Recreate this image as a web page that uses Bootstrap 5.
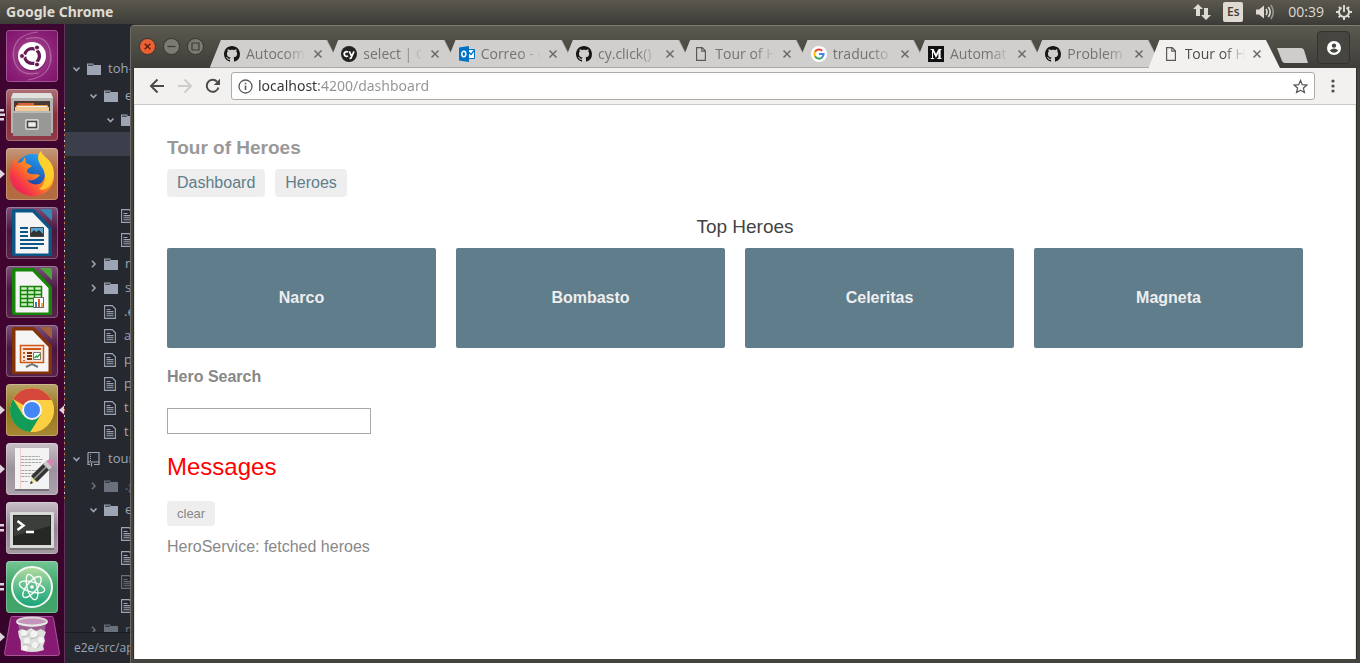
<!DOCTYPE html>
<html lang="en">
<head>
<meta charset="utf-8">
<meta name="viewport" content="width=device-width, initial-scale=1">
<title>Tour of Heroes</title>
<link href="https://cdn.jsdelivr.net/npm/bootstrap@5.3.0/dist/css/bootstrap.min.css" rel="stylesheet">
<style>
  body { font-family: "Open Sans", "Noto Sans", sans-serif; background: #282b30; }
  svg { display: block; flex: none; }
  button { padding: 0; border: 0; background: none; }

  /* system bar */
  .sysbar { height: 24px; background: linear-gradient(#5a584e, #3d3c38); color: #dfdbd2; font-size: 14px; line-height: 24px; padding: 0 8px 0 6px; }
  .sysbar strong { font-family: "Noto Sans", sans-serif; }
  .tray { gap: 12px; }
  .keymap { width: 20px; height: 20px; border-radius: 2px; background: #dfdbd2; color: #3d3c38; font-size: 12px; font-weight: 600; line-height: 20px; text-align: center; }

  /* launcher */
  .launcher { position: relative; width: 65px; padding: 6px 0 0 6px; gap: 7px; background: linear-gradient(#3d0630, #42032f 60%, #35042a); border-right: 1px solid #66305c; }
  .launcher::after { content: ""; position: absolute; right: -1px; top: 13%; bottom: 25%; width: 1px; background: repeating-linear-gradient(#d9c9c4 0 2px, #3c2a3a 2px 5px, #c7764e 5px 7px, #4a2f45 7px 11px); }
  .tile { width: 52px; height: 52px; border-radius: 4px; box-shadow: inset 0 0 0 1px #ffffff40; }
  .tile.bin { height: 42px; margin-top: -4px; box-shadow: none; }
  .pip { left: -6px; top: 0; }
  .pip-end { right: -6px; top: 0; }
  .t-dash { background: radial-gradient(circle at 50% 50%, #b463a1, #8c2178 60%, #7d1168); }
  .t-files { background: linear-gradient(#ad7278, #8b2d3a 50%, #8f3c48); }
  .t-fox { background: linear-gradient(#c49a7c, #b5683a 45%, #b46c42); }
  .t-office { background: linear-gradient(#7d527b, #4b1640 45%, #582449); }
  .t-chrome { background: linear-gradient(#b8a369, #96761b 50%, #a88834); }
  .t-edit { background: linear-gradient(#c9c0c7, #9c929b 50%, #aca2ab); }
  .t-term { background: linear-gradient(#c9c0c9, #91858f 50%, #a59aa4); }
  .t-atom { background: linear-gradient(#74c695, #3aa263 50%, #44a56c); }

  /* editor tree */
  .editor { width: 65px; background: #25292f; color: #9da5b4; font-size: 13px; }
  .tree { padding-top: 30px; }
  .tree li { height: 24px; padding-left: 7px; white-space: nowrap; overflow: hidden; }
  .tree li.root { height: 30px; }
  .tree li.d1 { padding-left: 24px; }
  .tree li.d2 { padding-left: 41px; }
  .tree li.picked { background: #3a3f4b; }
  .tree li.dim { color: #6a707c; }
  .chev { width: 9px; margin-right: 6px; flex: none; }
  .tree .ico { margin-right: 7px; }
  .statusline { height: 31px; line-height: 30px; padding-left: 9px; border-top: 1px solid #181a1f; font-size: 12px; white-space: nowrap; overflow: hidden; }

  /* browser window */
  .browser { min-width: 0; padding: 0 4px 4px 4px; background: #44433d; border-top: 1px solid #3a3934; border-radius: 5px 0 0 0; box-shadow: inset 1px 0 0 #6b6961; }
  .frame { box-shadow: -1px 0 0 #2f2e2b, 1px 0 0 #2f2e2b; }
  .titlebar { height: 43px; margin: 0 -4px; padding: 0 10px 0 8px; background: linear-gradient(#5b594f, #3e3d39); border-top: 1px solid #807e73; border-left: 1px solid #6b6961; border-radius: 5px 0 0 0; }
  .winbtns { gap: 7px; padding: 12px 6px 0 0; }
  .tabs { min-width: 0; padding-top: 14px; }
  .tab { position: relative; z-index: 1; isolation: isolate; flex: 1 1 0; min-width: 0; height: 28px; padding-left: 14px; font-size: 14px; color: #75736f; }
  .tab::before, .tab::after { content: ""; position: absolute; left: 0; right: -14px; top: 0; bottom: 0; z-index: -1; background: #a9a7a3; clip-path: polygon(0 100%, 11px 0, calc(100% - 14px) 0, 100% 100%); }
  .tab::after { right: -13px; bottom: 1px; background: #d1cfcd; }
  .tab.on { z-index: 3; color: #4c4c4c; }
  .tab.on::before, .tab.on::after { background: #f2f1f0; }
  .tab.on::after { bottom: 0; }
  .tab a { color: inherit; width: 60px; margin-left: 6px; overflow: hidden; white-space: nowrap; line-height: 28px; -webkit-mask-image: linear-gradient(90deg, #000 65%, transparent); mask-image: linear-gradient(90deg, #000 65%, transparent); }
  .tab button { margin-left: 7px; }
  .newtab { margin: 22px 9px 0 10px; }
  .profile { width: 33px; height: 33px; margin-top: 5px; border: 1px solid #33322f; border-radius: 4px; background: #46453f; }
  .toolbar { height: 37px; background: #f2f1f0; border-bottom: 1px solid #cbc9c7; padding: 0 20px 0 15px; }
  .urlbox { height: 28px; margin: 0 15px 0 10px; padding: 0 6px; border: 1px solid #adaba8; border-radius: 3px; background: #fff; }
  .urlbox input { border: 0; outline: 0; padding: 0; margin-left: 5px; min-width: 0; font-family: "Noto Sans", sans-serif; font-size: 14px; line-height: 24px; color: transparent; background: linear-gradient(90deg, #333 61px, #929292 61px); -webkit-background-clip: text; background-clip: text; }

  /* page */
  .page { background: #fff; border: 0 solid #e4e4e2; border-width: 0 1px; color: #888; font-family: "Liberation Sans", Arial, sans-serif; font-size: 16px; line-height: 18px; padding: 32px 32px 0 32px; overflow: hidden; }
  .page h1 { font-size: 19px; line-height: 22px; font-weight: 700; color: #999; margin: 0 0 10px; }
  .pill { display: block; padding: 5px 10px; border-radius: 4px; background: #eee; color: #607d8b; text-decoration: none; }
  .page h3 { font-size: 19px; line-height: 22px; font-weight: 400; color: #444; margin: 19px 0 10px; }
  .hero { display: flex; height: 100px; margin-right: 20px; border-radius: 2px; background: #607d8b; color: #eee; font-weight: 700; text-decoration: none; }
  .page label { display: block; font-weight: 700; margin: 20px 0 22px; }
  .herosearch { display: block; width: 204px; height: 26px; border: 1px solid #a9a9a9; padding: 0 4px; }
  .page h2 { font-size: 24px; line-height: 28px; font-weight: 400; color: red; margin: 19px 0 20px; }
  .clearbtn { display: block; height: 25px; padding: 0 10px; border-radius: 4px; background: #eee; color: #888; font-size: 13px; margin-bottom: 12px; }
</style>
</head>
<body>
<svg width="0" height="0" class="position-absolute" aria-hidden="true">
  <defs>
    <symbol id="gh" viewBox="0 0 16 16"><path fill="#171515" d="M8 0C3.58 0 0 3.58 0 8c0 3.54 2.29 6.53 5.47 7.59.4.07.55-.17.55-.38 0-.19-.01-.82-.01-1.49-2.01.37-2.53-.49-2.69-.94-.09-.23-.48-.94-.82-1.13-.28-.15-.68-.52-.01-.53.63-.01 1.08.58 1.23.82.72 1.21 1.87.87 2.33.66.07-.52.28-.87.51-1.07-1.78-.2-3.64-.89-3.64-3.95 0-.87.31-1.59.82-2.15-.08-.2-.36-1.02.08-2.12 0 0 .67-.21 2.2.82.64-.18 1.32-.27 2-.27s1.36.09 2 .27c1.53-1.04 2.2-.82 2.2-.82.44 1.1.16 1.92.08 2.12.51.56.82 1.27.82 2.15 0 3.07-1.87 3.75-3.65 3.95.29.25.54.73.54 1.48 0 1.07-.01 1.93-.01 2.2 0 .21.15.46.55.38A8.01 8.01 0 0 0 16 8c0-4.42-3.58-8-8-8z"/></symbol>
    <symbol id="doc" viewBox="0 0 16 16"><path fill="none" stroke="#5a5a5a" stroke-width="1.2" d="M3.6 1.6h5.6l3.2 3.2v9.6H3.6zM8.8 1.6v3.6h3.6"/></symbol>
    <symbol id="x" viewBox="0 0 10 10"><path fill="none" stroke="#6b6a68" stroke-width="1.5" d="M1.5 1.5l7 7M8.5 1.5l-7 7"/></symbol>
    <symbol id="down" viewBox="0 0 9 8"><path fill="none" stroke="#9da5b4" stroke-width="1.6" d="M1.5 2.5l3 3 3-3"/></symbol>
    <symbol id="right" viewBox="0 0 9 8"><path fill="none" stroke="currentColor" stroke-width="1.6" d="M3 .8l3 3.2-3 3.2"/></symbol>
    <symbol id="folder" viewBox="0 0 14 12"><path fill="currentColor" d="M0 .5h6.5V2H14v10H0z"/><path stroke="#25292f" d="M1 2.2h5"/></symbol>
    <symbol id="file" viewBox="0 0 12 14"><path fill="none" stroke="currentColor" stroke-width="1.1" d="M.6 .6h7.6l3.2 3.2v9.6H.6zM2.5 4.5h4M2.5 6.6h7M2.5 8.7h7M2.5 10.8h7"/></symbol>
    <symbol id="arrowpip" viewBox="0 0 6 52"><path fill="#ddd5db" d="M0 21.5L5 26 0 30.5z"/></symbol>
    <symbol id="barpip" viewBox="0 0 6 52"><path fill="#ddd5db" d="M0 22h4v2.500H0zM0 27h4v2.500H0z"/></symbol>
  </defs>
</svg>

<div class="vh-100 d-flex flex-column overflow-hidden">
  <header class="sysbar d-flex align-items-center flex-shrink-0">
    <strong class="me-auto">Google Chrome</strong>
    <div class="tray d-flex align-items-center">
      <svg width="18" height="16" viewBox="0 0 18 16" aria-label="Network"><path fill="#dfdbd2" d="M5 0l5 5H7v7H3V5H0zM13 16l5-5h-3V4h-4v7H8z"/></svg>
      <span class="keymap">Es</span>
      <svg width="21" height="16" viewBox="0 0 21 16" aria-label="Volume"><path fill="#dfdbd2" d="M1 5.5h3L9 1.5v13l-5-4H1z"/><g fill="none" stroke="#dfdbd2" stroke-width="1.6"><path d="M11 5q2 3 0 6M13.300 3q3.800 5 0 10"/><path stroke="#99968e" d="M15.800 1q5 7 0 14"/></g></svg>
      <time>00:39</time>
      <svg width="16" height="16" viewBox="0 0 16 16" aria-label="Session"><g fill="none" stroke="#dfdbd2"><path stroke-width="1.9" d="M5.500 3.600a5 5 0 1 0 5 0M8 1v7"/><path stroke-width="2" d="M2.900 2.900l1.500 1.500M13.100 2.900l-1.500 1.500M0 8h3M13 8h3M2.600 13.400l1.800-1.800M13.400 13.400l-1.800-1.800M8 13v3"/></g></svg>
    </div>
  </header>

  <div class="d-flex flex-grow-1" style="min-height:0">
    <nav class="launcher d-flex flex-column flex-shrink-0" aria-label="Launcher">
      <button class="tile t-dash position-relative flex-shrink-0" aria-label="Search">
        <svg width="52" height="52" viewBox="0 0 52 52"><g fill="none" stroke="#e3b8d8" stroke-opacity=".4" stroke-width="1.2"><path d="M8 30Q4 5 32 2M44 22Q48 46 22 50M20 9Q46 2 45 32M33 43Q8 48 7 22"/></g><circle cx="26" cy="27" r="14.500" fill="#5d0e50" opacity=".5"/><circle cx="26" cy="26" r="14" fill="#fff"/><circle cx="26" cy="26" r="7.4" fill="none" stroke="#641a54" stroke-width="3.2" stroke-dasharray="13.5 2" stroke-dashoffset="6.7"/><g fill="#641a54" stroke="#fff"><circle cx="16" cy="26" r="2.500"/><circle cx="31" cy="17.500" r="2.500"/><circle cx="31" cy="34.500" r="2.500"/></g></svg>
      </button>
      <button class="tile t-files position-relative flex-shrink-0" aria-label="Files">
        <svg width="52" height="52" viewBox="0 0 52 52"><path fill="#b4b4b2" d="M7 4h38l2 5v35H5V9z"/><path fill="#e0e0de" d="M7 4h38l2 5H5z"/><path fill="#4a3a33" d="M8 12h36v11H8z"/><path fill="#d9623b" d="M12 14h16v3H12z"/><path fill="#e79345" d="M10 16h32v4H10z"/><path fill="#f1c994" d="M9 18h34v4H9z"/><path fill="#f3f0ea" d="M11 17h30v1H11z"/><path fill="#989897" d="M7 22h38v25H7z"/><path fill="#b9b9b7" d="M7 22h38v2H7z"/><rect x="19" y="30" width="14" height="11" rx="2" fill="#d3d3d1"/><rect x="21.500" y="32.500" width="9" height="6" fill="#eee" stroke="#444" stroke-width="1.500"/></svg>
        <svg class="pip position-absolute" width="6" height="52" viewBox="0 0 6 52"><path fill="#ddd5db" d="M0 20h4v2.500H0zM0 24.500h5V27H0zM0 29h4v2.500H0z"/></svg>
      </button>
      <button class="tile t-fox position-relative flex-shrink-0" aria-label="Firefox">
        <svg width="52" height="52" viewBox="0 0 52 52"><defs><linearGradient id="ff" x1="1" y1="0" x2="0" y2="1"><stop offset=".1" stop-color="#ffe030"/><stop offset=".45" stop-color="#ff8a1f"/><stop offset=".75" stop-color="#f5334a"/><stop offset="1" stop-color="#e01464"/></linearGradient><linearGradient id="fb" x1=".7" y1="0" x2=".3" y2="1"><stop offset="0" stop-color="#23a5f5"/><stop offset="1" stop-color="#1b2f94"/></linearGradient></defs><circle cx="27" cy="24" r="18" fill="url(#fb)"/><path fill="url(#ff)" d="M10 9l1 6 5-1 3-5 1 6 6 3c-2 2-5 2-5 5 0 2 2 2 4 3 3 1 7-1 9 2-2 0-3 3-7 4-3 1-5 0-6-1 2 5 9 7 14 4 5-4 5-11 1-17-4-5-6-10-1-15 1 5 6 6 9 11 4 5 4 10 4 14 0 12-9 20-21 20S4 39 4 28C4 20 7 13 10 9z"/><path fill="#ffd42e" d="M35 3c1 5 6 6 9 11 5 8 4 16 1 22-3 5-9 7-12 5 6-4 8-12 4-20-4-6-7-11-2-18z" opacity=".85"/></svg>
        <svg class="pip position-absolute" width="6" height="52"><use href="#arrowpip"/></svg>
      </button>
      <button class="tile t-office position-relative flex-shrink-0" aria-label="Writer">
        <svg width="52" height="52" viewBox="0 0 52 52"><path fill="#0b5685" d="M8 2h20l18 19v28H8q-2 0-2-2V4q0-2 2-2z"/><path fill="#3a87b4" d="M34 2h10q2 0 2 2v10z"/><path fill="#f5f5f5" d="M9.500 5.500h17L42.500 22v24.500h-33z"/><g stroke="#0b5685" stroke-width="2"><path d="M14 21h8M14 25h8M14 29h8M14 33h24M14 37h24M14 41h18"/></g><path fill="#57a7d5" stroke="#444" d="M24.500 20.500h13v9h-13z"/><path fill="#333" d="M25 29v-3l3-3 2 2 3-2 4 4v2z"/></svg>
      </button>
      <button class="tile t-office position-relative flex-shrink-0" aria-label="Calc">
        <svg width="52" height="52" viewBox="0 0 52 52"><path fill="#168407" d="M8 2h20l18 19v28H8q-2 0-2-2V4q0-2 2-2z"/><path fill="#4aa53b" d="M34 2h10q2 0 2 2v10z"/><path fill="#f5f5f5" d="M9.500 5.500h17L42.500 22v24.500h-33z"/><path fill="#cdeec7" stroke="#168407" stroke-width="1.500" d="M14.500 20.500h21v20h-21zM14.500 24.500h21M14.500 28.500h21M14.500 32.500h21M14.500 36.500h21M21.500 20.500v20M28.500 20.500v20"/><path fill="#fff" stroke="#666" d="M27.500 31.500h10v10h-10z"/><path fill="#2d86c4" d="M29 36h2v5h-2z"/><path fill="#d95b22" d="M32 33h2v8h-2z"/><path fill="#e9aa52" d="M35 37h2v4h-2z"/></svg>
      </button>
      <button class="tile t-office position-relative flex-shrink-0" aria-label="Impress">
        <svg width="52" height="52" viewBox="0 0 52 52"><path fill="#843309" d="M8 2h20l18 19v28H8q-2 0-2-2V4q0-2 2-2z"/><path fill="#a0603c" d="M34 2h10q2 0 2 2v10z"/><path fill="#f5f5f5" d="M9.500 5.500h17L42.500 22v24.500h-33z"/><path fill="#f7e7dc" stroke="#cf5a18" stroke-width="1.500" d="M14.500 20.500h23v17h-23z"/><path stroke="#cf5a18" stroke-width="2" d="M17 24h18"/><path stroke="#cf5a18" stroke-width="2" stroke-dasharray="2 2" d="M18 27v9"/><path stroke="#843309" stroke-width="2" d="M21 28h5M21 31h5M21 34h5"/><path fill="#fff" stroke="#777" d="M27.500 27.500h7v7h-7z"/><path fill="none" stroke="#31a331" stroke-width="1.500" d="M28.500 33l2-2 1 1 2.500-3"/><path fill="none" stroke="#777" stroke-width="2" d="M26 38v2M20 42l6-3 6 3"/></svg>
      </button>
      <button class="tile t-chrome position-relative flex-shrink-0" aria-label="Chrome">
        <svg width="52" height="52" viewBox="0 0 52 52"><circle cx="26" cy="26" r="22" fill="#fcce41"/><path fill="#d5483c" d="M26 26L7 15A22 22 0 0 1 45.500 16H26z"/><path fill="#119d58" d="M7 15l10 16 9 5-2 12A22 22 0 0 1 7 15z"/><path fill="#119d58" d="M17 31l18 0-10.500 17z"/><path fill="#fcce41" d="M45.300 16H26l9 15-10.500 17A22 22 0 0 0 45.300 16z"/><circle cx="26" cy="26" r="10" fill="#f4f4f4"/><circle cx="26" cy="26" r="8" fill="#4486f4"/></svg>
        <svg class="pip position-absolute" width="6" height="52"><use href="#arrowpip"/></svg>
        <svg class="pip-end position-absolute" width="6" height="52" viewBox="0 0 6 52"><path fill="#ddd5db" d="M6 21.500L1 26l5 4.500z"/></svg>
      </button>
      <button class="tile t-edit position-relative flex-shrink-0" aria-label="Text Editor">
        <svg width="52" height="52" viewBox="0 0 52 52"><path fill="#77717a" d="M9 7h34v41H9z"/><path fill="#f3f3f3" d="M9 5h34v41H9z"/><path stroke="#f0cccc" d="M14.500 5v41"/><path stroke="#aaa" stroke-dasharray="3 .6" d="M15 13.500h19M15 16.500h22M15 19.500h20M15 22.500h10M15 27.500h18M15 30.500h20M15 33.500h9M15 38.500h7"/><path fill="#e8e3a6" d="M24 41l2-9 6 6z"/><path fill="#343434" d="M25 33L38 20l6 6-13 13z"/><path stroke="#999" stroke-width="1.500" d="M28 36l13-13"/><path fill="#c9c9c9" d="M37 21l3-3 6 6-3 3z"/><path fill="#d685b4" d="M40 18q4-3 7-1t-1 7z"/><path fill="#222" d="M24 41l1-3 2 2z"/></svg>
        <svg class="pip position-absolute" width="6" height="52"><use href="#arrowpip"/></svg>
      </button>
      <button class="tile t-term position-relative flex-shrink-0" aria-label="Terminal">
        <svg width="52" height="52" viewBox="0 0 52 52"><rect x="4" y="10" width="44" height="37" rx="1" fill="#d9d9d7"/><path fill="#777" d="M4 46h44v2H4z"/><path fill="#262826" d="M7 13h38v30H7z"/><path fill="#3c3e3c" d="M8 14h36v10L8 34z"/><path fill="none" stroke="#fff" stroke-width="2.500" d="M11.500 19l6 4.500-6 4.500M20 30h8"/></svg>
        <svg class="pip position-absolute" width="6" height="52"><use href="#barpip"/></svg>
      </button>
      <button class="tile t-atom position-relative flex-shrink-0" aria-label="Atom">
        <svg width="52" height="52" viewBox="0 0 52 52"><defs><linearGradient id="at" x2="0" y2="1"><stop offset="0" stop-color="#b4dba0"/><stop offset=".6" stop-color="#4cb888"/><stop offset="1" stop-color="#17a479"/></linearGradient></defs><circle cx="26" cy="26" r="20" fill="url(#at)" stroke="#f4fbf4" stroke-width="2"/><g fill="none" stroke="#fff" stroke-width="1.300"><ellipse cx="26" cy="26" rx="13" ry="5" transform="rotate(15 26 26)"/><ellipse cx="26" cy="26" rx="13" ry="5" transform="rotate(75 26 26)"/><ellipse cx="26" cy="26" rx="13" ry="5" transform="rotate(-50 26 26)"/></g><circle cx="26" cy="26" r="1.800" fill="#fff"/></svg>
        <svg class="pip position-absolute" width="6" height="52"><use href="#barpip"/></svg>
      </button>
      <button class="tile bin position-relative flex-shrink-0" aria-label="Trash">
        <svg width="52" height="42" viewBox="0 0 52 42" overflow="visible"><path fill="#861a72" stroke="#a65596" d="M6 .5h40q1 0 1.500 2l6 35q0 2-2 2h-51q-2 0-2-2l6-35q.5-2 1.500-2z"/><path fill="#9c6090" d="M12 5h28l-3 29q-11 4-22 0z"/><path fill="#dededc" d="M12 15l4-2 4 2 5-3 5 3 5-2 5 3-2 5 1 4-2 5 1 4q-12 4-23 0l0-5 0-4-2-4z"/><g fill="#f4f4f2"><circle cx="18" cy="17" r="3"/><circle cx="28" cy="18" r="3.500"/><circle cx="35" cy="24" r="3"/><circle cx="21" cy="25" r="3"/><circle cx="29" cy="29" r="3"/><circle cx="19" cy="32" r="2.500"/></g><path fill="none" stroke="#bcbab9" d="M16 21l5-1 3-2M24 23l5-1 4-3M17 29l5-1 3 3M31 32l3-4"/><ellipse cx="26" cy="5.500" rx="15" ry="4" fill="#c594bb" stroke="#d7d7d5" stroke-width="2"/><path fill="none" stroke="#eaeaea" stroke-width="1.500" d="M11 7q15 6 30 0"/></svg>
        <svg class="pip position-absolute" width="6" height="42" viewBox="0 5 6 42"><use href="#arrowpip" width="6" height="52"/></svg>
      </button>
    </nav>

    <aside class="editor d-flex flex-column flex-shrink-0">
      <ul class="tree list-unstyled mb-0 flex-grow-1 overflow-hidden" style="min-height:0">
        <li class="root d-flex align-items-center"><svg class="chev" height="8"><use href="#down"/></svg><svg class="ico" width="14" height="12"><use href="#folder"/></svg>toh-</li>
        <li class="d1 d-flex align-items-center"><svg class="chev" height="8"><use href="#down"/></svg><svg class="ico" width="14" height="12"><use href="#folder"/></svg>e</li>
        <li class="d2 d-flex align-items-center"><svg class="chev" height="8"><use href="#down"/></svg><svg class="ico" width="14" height="12"><use href="#folder"/></svg></li>
        <li class="picked"></li>
        <li></li>
        <li></li>
        <li class="d2 d-flex align-items-center"><span class="chev"></span><svg class="ico" width="12" height="14"><use href="#file"/></svg></li>
        <li class="d2 d-flex align-items-center"><span class="chev"></span><svg class="ico" width="12" height="14"><use href="#file"/></svg></li>
        <li class="d1 d-flex align-items-center"><svg class="chev" height="8"><use href="#right"/></svg><svg class="ico" width="14" height="12"><use href="#folder"/></svg>n</li>
        <li class="d1 d-flex align-items-center"><svg class="chev" height="8"><use href="#right"/></svg><svg class="ico" width="14" height="12"><use href="#folder"/></svg>s</li>
        <li class="d1 d-flex align-items-center"><span class="chev"></span><svg class="ico me-2" width="12" height="14"><use href="#file"/></svg>.e</li>
        <li class="d1 d-flex align-items-center"><span class="chev"></span><svg class="ico me-2" width="12" height="14"><use href="#file"/></svg>a</li>
        <li class="d1 d-flex align-items-center"><span class="chev"></span><svg class="ico me-2" width="12" height="14"><use href="#file"/></svg>p</li>
        <li class="d1 d-flex align-items-center"><span class="chev"></span><svg class="ico me-2" width="12" height="14"><use href="#file"/></svg>p</li>
        <li class="d1 d-flex align-items-center"><span class="chev"></span><svg class="ico me-2" width="12" height="14"><use href="#file"/></svg>t</li>
        <li class="d1 d-flex align-items-center"><span class="chev"></span><svg class="ico me-2" width="12" height="14"><use href="#file"/></svg>t</li>
        <li class="root d-flex align-items-center"><svg class="chev" height="8"><use href="#down"/></svg><svg class="ico" width="14" height="16" viewBox="0 0 14 16"><path fill="none" stroke="#9da5b4" stroke-width="1.200" d="M1 1.500h11v12H7M3 13.500H1v-12M1 11h11M4.500 12v3.500"/><path stroke="#9da5b4" stroke-dasharray="1 1" d="M3.500 3v7"/></svg>tour</li>
        <li class="d1 dim d-flex align-items-center"><svg class="chev" height="8"><use href="#right"/></svg><svg class="ico" width="14" height="12"><use href="#folder"/></svg>.g</li>
        <li class="d1 d-flex align-items-center"><svg class="chev" height="8"><use href="#down"/></svg><svg class="ico" width="14" height="12"><use href="#folder"/></svg>e</li>
        <li class="d2 d-flex align-items-center"><span class="chev"></span><svg class="ico" width="12" height="14"><use href="#file"/></svg></li>
        <li class="d2 d-flex align-items-center"><span class="chev"></span><svg class="ico" width="12" height="14"><use href="#file"/></svg></li>
        <li class="d2 dim d-flex align-items-center"><span class="chev"></span><svg class="ico" width="12" height="14"><use href="#file"/></svg></li>
        <li class="d2 d-flex align-items-center"><span class="chev"></span><svg class="ico" width="12" height="14"><use href="#file"/></svg></li>
        <li class="d1 dim d-flex align-items-center"><svg class="chev" height="8"><use href="#right"/></svg><svg class="ico" width="14" height="12"><use href="#folder"/></svg>n</li>
      </ul>
      <div class="statusline flex-shrink-0">e2e/src/ap</div>
    </aside>

    <div class="browser flex-grow-1 d-flex flex-column">
      <div class="titlebar d-flex flex-shrink-0">
        <div class="winbtns d-flex">
          <button aria-label="Close window" class="align-self-start"><svg width="17" height="17" viewBox="0 0 17 17"><circle cx="8.500" cy="8.500" r="8" fill="#ea6035" stroke="#35342f"/><path stroke="#5e2008" stroke-width="1.400" d="M5.700 5.700l5.600 5.600M11.300 5.700l-5.600 5.600"/></svg></button>
          <button aria-label="Minimize" class="align-self-start"><svg width="17" height="17" viewBox="0 0 17 17"><circle cx="8.500" cy="8.500" r="8" fill="#7b7a73" stroke="#35342f"/><path stroke="#3c3b37" stroke-width="1.200" d="M4.500 8.500h8"/></svg></button>
          <button aria-label="Maximize" class="align-self-start"><svg width="17" height="17" viewBox="0 0 17 17"><circle cx="8.500" cy="8.500" r="8" fill="#7b7a73" stroke="#35342f"/><path fill="none" stroke="#3c3b37" stroke-width="1.200" d="M5 5h7v7H5z"/></svg></button>
        </div>
        <div class="tabs d-flex flex-grow-1">
          <div class="tab d-flex align-items-center"><svg width="16" height="16"><use href="#gh"/></svg><a href="#" class="text-decoration-none">Autocom</a><button aria-label="Close tab"><svg width="10" height="10"><use href="#x"/></svg></button></div>
          <div class="tab d-flex align-items-center"><svg width="16" height="16" viewBox="0 0 16 16"><circle cx="8" cy="8" r="8" fill="#222"/><path fill="none" stroke="#fff" stroke-width="1.700" d="M7 6.200a2.300 2.300 0 1 0 0 3.600M8.300 5.300L10.500 10M13 5.300L10.300 11.500q-.5 1-1.800.8"/></svg><a href="#" class="text-decoration-none">select | C</a><button aria-label="Close tab"><svg width="10" height="10"><use href="#x"/></svg></button></div>
          <div class="tab d-flex align-items-center"><svg width="16" height="16" viewBox="0 0 16 16"><path fill="#fff" stroke="#0072c6" d="M9 3.500h6.500v9H9z"/><path fill="none" stroke="#0072c6" stroke-width="1.300" d="M9.500 6l2.500 2.500L15.500 4"/><path fill="#0072c6" d="M0 1.500L10 0v16L0 14.500z"/><ellipse cx="4.800" cy="8" rx="2" ry="2.700" fill="none" stroke="#fff" stroke-width="1.500"/></svg><a href="#" class="text-decoration-none">Correo - c</a><button aria-label="Close tab"><svg width="10" height="10"><use href="#x"/></svg></button></div>
          <div class="tab d-flex align-items-center"><svg width="16" height="16"><use href="#gh"/></svg><a href="#" class="text-decoration-none">cy.click()</a><button aria-label="Close tab"><svg width="10" height="10"><use href="#x"/></svg></button></div>
          <div class="tab d-flex align-items-center"><svg width="16" height="16"><use href="#doc"/></svg><a href="#" class="text-decoration-none">Tour of H</a><button aria-label="Close tab"><svg width="10" height="10"><use href="#x"/></svg></button></div>
          <div class="tab d-flex align-items-center"><svg width="16" height="16" viewBox="0 0 16 16"><circle cx="8" cy="8" r="8" fill="#fff"/><g fill="none" stroke-width="2"><path stroke="#ea4335" d="M4 5.700A4.600 4.600 0 0 1 11.200 4.700"/><path stroke="#fbbc05" d="M4 5.700a4.600 4.600 0 0 0 0 4.600"/><path stroke="#34a853" d="M4 10.300a4.600 4.600 0 0 0 7 1.200"/><path stroke="#4285f4" d="M11 11.500Q12.500 10 12.600 8H8"/></g></svg><a href="#" class="text-decoration-none">traducto</a><button aria-label="Close tab"><svg width="10" height="10"><use href="#x"/></svg></button></div>
          <div class="tab d-flex align-items-center"><svg width="16" height="16" viewBox="0 0 16 16"><path fill="#111" d="M0 0h16v16H0z"/><path fill="none" stroke="#fff" stroke-width="2.200" d="M11.500 4v8"/><path fill="none" stroke="#fff" stroke-width="1" d="M4.500 4v8M2.500 3.500h3M10.500 3.500h3M2.700 12.500h3.500M9.300 12.500h4.200"/><path fill="none" stroke="#fff" stroke-width="1.700" d="M4.800 3.500L8 10l3-6"/></svg><a href="#" class="text-decoration-none">Automat</a><button aria-label="Close tab"><svg width="10" height="10"><use href="#x"/></svg></button></div>
          <div class="tab d-flex align-items-center"><svg width="16" height="16"><use href="#gh"/></svg><a href="#" class="text-decoration-none">Problem</a><button aria-label="Close tab"><svg width="10" height="10"><use href="#x"/></svg></button></div>
          <div class="tab on d-flex align-items-center"><svg width="16" height="16"><use href="#doc"/></svg><a href="#" class="text-decoration-none">Tour of H</a><button aria-label="Close tab"><svg width="10" height="10"><use href="#x"/></svg></button></div>
        </div>
        <button class="newtab align-self-start" aria-label="New tab"><svg width="32" height="15" viewBox="0 0 32 15"><path fill="#cfcdcb" d="M1 0h24q2 0 3 2l4 13H9q-2 0-3-2z"/></svg></button>
        <button class="profile d-flex align-items-center justify-content-center flex-shrink-0" aria-label="Profile"><svg width="14" height="14" viewBox="0 0 14 14"><circle cx="7" cy="7" r="7" fill="#fff"/><circle cx="7" cy="4.600" r="2.200" fill="#46453f"/><path fill="#46453f" d="M2.700 9.500q4.300-4 8.600 0-4.300 4.500-8.600 0z"/></svg></button>
      </div>

      <div class="frame flex-grow-1 d-flex flex-column" style="min-height:0">
        <form class="toolbar d-flex align-items-center flex-shrink-0" onsubmit="return false">
          <button type="button" aria-label="Back"><svg width="16" height="16" viewBox="0 0 16 16"><path fill="none" stroke="#4b4b4b" stroke-width="2" d="M15 8H2.500M8.500 1.500L2 8l6.500 6.500"/></svg></button>
          <button type="button" aria-label="Forward" class="ms-2 me-2 ps-1"><svg width="16" height="16" viewBox="0 0 16 16"><path fill="none" stroke="#cfcdcb" stroke-width="2" d="M1 8h12.500M7.500 1.500L14 8l-6.500 6.500"/></svg></button>
          <button type="button" aria-label="Reload" class="ps-1"><svg width="16" height="16" viewBox="0 0 16 16"><path fill="none" stroke="#4b4b4b" stroke-width="2" d="M13.500 9.500a6 6 0 1 1-1.300-5.700"/><path fill="#4b4b4b" d="M15 .8V7H8.800z"/></svg></button>
          <div class="urlbox d-flex align-items-center flex-grow-1">
            <svg width="15" height="15" viewBox="0 0 15 15"><circle cx="7.500" cy="7.500" r="6.500" fill="none" stroke="#5a5a5a" stroke-width="1.300"/><path stroke="#5a5a5a" stroke-width="1.600" d="M7.500 6.500V11M7.500 3.700v1.600"/></svg>
            <input class="flex-grow-1" type="text" aria-label="Address" value="localhost:4200/dashboard">
            <button type="button" aria-label="Bookmark"><svg width="15" height="15" viewBox="0 0 15 15"><path fill="none" stroke="#5a5a5a" stroke-width="1.300" d="M7.500 1.500l1.800 4.200 4.500.4-3.400 3 1 4.400-3.900-2.300-3.900 2.300 1-4.400-3.400-3 4.500-.4z"/></svg></button>
          </div>
          <button type="button" aria-label="Menu"><svg width="6" height="14" viewBox="0 0 6 14"><g fill="#4b4b4b"><circle cx="3" cy="2" r="1.600"/><circle cx="3" cy="7" r="1.600"/><circle cx="3" cy="12" r="1.600"/></g></svg></button>
        </form>

        <main class="page flex-grow-1">
          <h1>Tour of Heroes</h1>
          <nav class="d-flex" style="gap:10px">
            <a class="pill" href="#">Dashboard</a>
            <a class="pill" href="#">Heroes</a>
          </nav>
          <h3 class="text-center">Top Heroes</h3>
          <div class="row g-0">
            <div class="col-3"><a class="hero align-items-center justify-content-center" href="#">Narco</a></div>
            <div class="col-3"><a class="hero align-items-center justify-content-center" href="#">Bombasto</a></div>
            <div class="col-3"><a class="hero align-items-center justify-content-center" href="#">Celeritas</a></div>
            <div class="col-3"><a class="hero align-items-center justify-content-center" href="#">Magneta</a></div>
          </div>
          <label for="search-box">Hero Search</label>
          <input id="search-box" class="herosearch" type="text">
          <h2>Messages</h2>
          <button class="clearbtn">clear</button>
          <div>HeroService: fetched heroes</div>
        </main>
      </div>
    </div>
  </div>
</div>
<script src="https://cdn.jsdelivr.net/npm/bootstrap@5.3.0/dist/js/bootstrap.bundle.min.js"></script>
</body>
</html>
